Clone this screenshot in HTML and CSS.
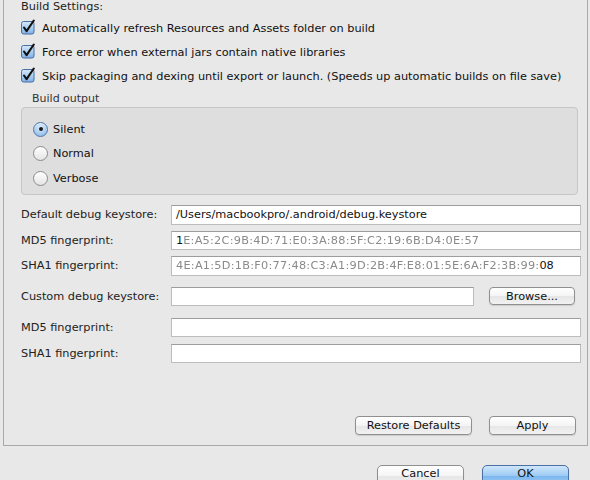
FILE: index.html
```html
<!DOCTYPE html>
<html>
<head>
<meta charset="utf-8">
<link rel="stylesheet" href="styles.css">
</head>
<body>
<div class="panel">
  <div class="title">Build Settings:</div>
  <div class="check-row">
    <svg class="cb" width="16" height="16" viewBox="0 0 16 16"><defs><linearGradient id="g1" x1="0" y1="0" x2="0" y2="1"><stop offset="0" stop-color="#d6e9fb"/><stop offset="1" stop-color="#7fb2e6"/></linearGradient></defs><rect x="0.5" y="2.5" width="12.5" height="12.5" rx="2" fill="url(#g1)" stroke="#4a6fa0"/><path d="M3 8.5 L5.6 12.2 L12.8 1.5" fill="none" stroke="#111" stroke-width="2.1" stroke-linecap="round" stroke-linejoin="round"/></svg>
    <span>Automatically refresh Resources and Assets folder on build</span>
  </div>
  <div class="check-row">
    <svg class="cb" width="16" height="16" viewBox="0 0 16 16"><defs><linearGradient id="g2" x1="0" y1="0" x2="0" y2="1"><stop offset="0" stop-color="#d6e9fb"/><stop offset="1" stop-color="#7fb2e6"/></linearGradient></defs><rect x="0.5" y="2.5" width="12.5" height="12.5" rx="2" fill="url(#g2)" stroke="#4a6fa0"/><path d="M3 8.5 L5.6 12.2 L12.8 1.5" fill="none" stroke="#111" stroke-width="2.1" stroke-linecap="round" stroke-linejoin="round"/></svg>
    <span>Force error when external jars contain native libraries</span>
  </div>
  <div class="check-row">
    <svg class="cb" width="16" height="16" viewBox="0 0 16 16"><defs><linearGradient id="g3" x1="0" y1="0" x2="0" y2="1"><stop offset="0" stop-color="#d6e9fb"/><stop offset="1" stop-color="#7fb2e6"/></linearGradient></defs><rect x="0.5" y="2.5" width="12.5" height="12.5" rx="2" fill="url(#g3)" stroke="#4a6fa0"/><path d="M3 8.5 L5.6 12.2 L12.8 1.5" fill="none" stroke="#111" stroke-width="2.1" stroke-linecap="round" stroke-linejoin="round"/></svg>
    <span>Skip packaging and dexing until export or launch. (Speeds up automatic builds on file save)</span>
  </div>

  <div class="group-label">Build output</div>
  <div class="group">
    <div class="radio-row"><span class="radio on"><span class="dot"></span></span><span>Silent</span></div>
    <div class="radio-row"><span class="radio"></span><span>Normal</span></div>
    <div class="radio-row"><span class="radio"></span><span>Verbose</span></div>
  </div>

  <div class="form">
    <div class="frow"><span class="lbl">Default debug keystore:</span><div class="field">/Users/macbookpro/.android/debug.keystore</div></div>
    <div class="frow"><span class="lbl">MD5 fingerprint:</span><div class="field">1<span class="blur">E:A5:2C:9B:4D:71:E0:3A:88:5F:C2:19:6B:D4:0E:57</span></div></div>
    <div class="frow"><span class="lbl">SHA1 fingerprint:</span><div class="field"><span class="blur">4E:A1:5D:1B:F0:77:48:C3:A1:9D:2B:4F:E8:01:5E:6A:F2:3B:99:</span>08</div></div>
  </div>

  <div class="form form2">
    <div class="frow"><span class="lbl">Custom debug keystore:</span><div class="field short"></div><button class="btn browse">Browse...</button></div>
    <div class="frow first-after"><span class="lbl">MD5 fingerprint:</span><div class="field"></div></div>
    <div class="frow"><span class="lbl">SHA1 fingerprint:</span><div class="field"></div></div>
  </div>

  <div class="spacer"></div>
  <div class="actions">
    <button class="btn restore">Restore Defaults</button>
    <button class="btn apply">Apply</button>
  </div>
</div>
<div class="dialog-bar">
  <button class="btn cancel">Cancel</button>
  <button class="btn ok">OK</button>
</div>
</body>
</html>
```

FILE: styles.css
```css
html, body {
  margin: 0;
  padding: 0;
  background: #e8e8e8;
  width: 590px;
  height: 480px;
  overflow: hidden;
  font-family: "DejaVu Sans", "Liberation Sans", sans-serif;
  font-size: 11.3px;
  color: #111;
}

.panel {
  margin-left: 3px;
  width: 585px;
  height: 446px;
  border-left: 1px solid #a9a9a9;
  border-right: 1px solid #a9a9a9;
  border-bottom: 1px solid #a9a9a9;
  padding: 0 6px 0 17px;
  box-sizing: border-box;
  display: flex;
  flex-direction: column;
}

.title {
  line-height: 14px;
  height: 14px;
  margin-bottom: 2px;
  color: #222;
}

.check-row {
  height: 24px;
  display: flex;
  align-items: center;
  gap: 5px;
}

.cb {
  flex: none;
  margin-top: -3px;
}

.group-label {
  margin-top: 4px;
  margin-left: 11px;
  line-height: 14px;
  height: 14px;
  font-size: 11px;
  color: #333;
}

.group {
  margin-top: 1px;
  margin-right: 3px;
  height: 88px;
  box-sizing: border-box;
  background: #dedede;
  border: 1px solid #c6c6c6;
  border-radius: 4px;
  padding: 9px 0 0 11px;
}

.radio-row {
  height: 24.5px;
  display: flex;
  align-items: center;
  gap: 5px;
}

.radio {
  width: 13px;
  height: 13px;
  border-radius: 50%;
  border: 1px solid #8c8c8c;
  background: linear-gradient(#ffffff, #e4e4e4);
  box-shadow: inset 0 1px 1px rgba(255,255,255,0.8);
  display: flex;
  align-items: center;
  justify-content: center;
  flex: none;
}

.radio.on {
  border-color: #4f77a8;
  background: radial-gradient(circle at 50% 35%, #e2f0fd, #8ebde9 80%);
}

.dot {
  width: 4px;
  height: 4px;
  border-radius: 50%;
  background: #1a1a1a;
}

.form {
  margin-top: 10px;
  display: flex;
  flex-direction: column;
  gap: 6px;
}

.form2 {
  margin-top: 11px;
  gap: 6.5px;
}

.form2 .first-after {
  margin-top: 5px;
}

.frow {
  display: flex;
  align-items: center;
  height: 19.5px;
}

.lbl {
  width: 150px;
  flex: none;
  color: #222;
}

.field {
  flex: 1;
  height: 100%;
  box-sizing: border-box;
  background: #fff;
  border: 1px solid #bdbdbd;
  border-top-color: #9d9d9d;
  padding-left: 4px;
  line-height: 18px;
  white-space: nowrap;
  overflow: hidden;
  color: #111;
}

.field.short {
  flex: none;
  width: 303px;
}

.blur {
  color: #8a8a8a;
  filter: blur(0.7px);
  letter-spacing: 0.25px;
}

.btn {
  font-family: "DejaVu Sans", "Liberation Sans", sans-serif;
  font-size: 11.3px;
  color: #111;
  height: 19px;
  padding: 0;
  border: 1px solid #8f8f8f;
  border-radius: 4px;
  background: linear-gradient(#ffffff 0%, #f4f4f4 50%, #e6e6e6 51%, #f2f2f2 100%);
  box-shadow: 0 1px 1px rgba(0,0,0,0.12);
}

.browse {
  margin-left: 15px;
  width: 86px;
  height: 18px;
}

.spacer {
  flex: 1;
}

.actions {
  display: flex;
  justify-content: flex-end;
  gap: 17px;
  padding-right: 5px;
  margin-bottom: 10px;
}

.restore {
  width: 117px;
}

.apply {
  width: 87px;
}

.dialog-bar {
  display: flex;
  justify-content: flex-end;
  gap: 18px;
  padding-right: 21px;
  padding-top: 19px;
}

.cancel, .ok {
  width: 87px;
  height: 22px;
  padding-bottom: 5px;
  border-radius: 5px;
}

.ok {
  border-color: #4a70a6;
  background: linear-gradient(#cfe6fb 0%, #9ccaf3 50%, #7ab6ee 51%, #a7d3f7 100%);
}
```
